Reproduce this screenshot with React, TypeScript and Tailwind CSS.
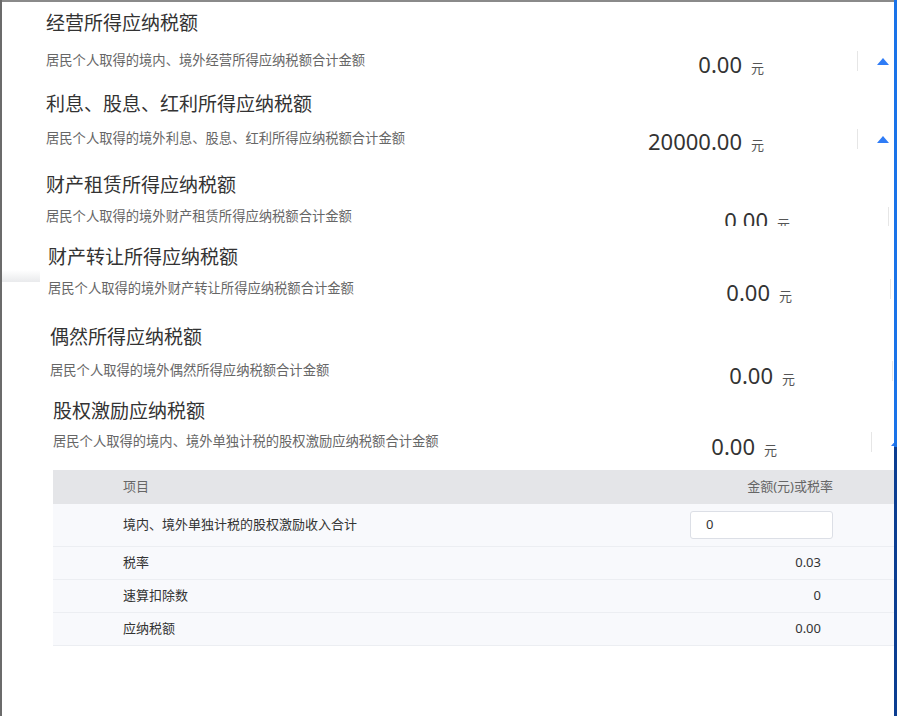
import React from "react";

type Section = {
  title: string;
  desc: string;
  value: string;
  wrap: string;
  row: string;
  spacer: string;
  valueNudge: string;
  showTri: boolean;
};

const sections: Section[] = [
  {
    title: "经营所得应纳税额",
    desc: "居民个人取得的境内、境外经营所得应纳税额合计金额",
    value: "0.00",
    wrap: "h-[81px] pl-[44px]",
    row: "mt-[9px] mr-[5px]",
    spacer: "w-[93px]",
    valueNudge: "mt-[6px]",
    showTri: true,
  },
  {
    title: "利息、股息、红利所得应纳税额",
    desc: "居民个人取得的境外利息、股息、红利所得应纳税额合计金额",
    value: "20000.00",
    wrap: "h-[81px] pl-[44px]",
    row: "mt-[6px] mr-[5px]",
    spacer: "w-[93px]",
    valueNudge: "mt-[4px]",
    showTri: true,
  },
  {
    // this block is cut off at the bottom in the screenshot
    title: "财产租赁所得应纳税额",
    desc: "居民个人取得的境外财产租赁所得应纳税额合计金额",
    value: "0.00",
    wrap: "h-[55px] pl-[44px] overflow-hidden mb-[17px]",
    row: "mt-[3px] mr-[-26px]",
    spacer: "w-[98px]",
    valueNudge: "mt-[6px]",
    showTri: false,
  },
  {
    title: "财产转让所得应纳税额",
    desc: "居民个人取得的境外财产转让所得应纳税额合计金额",
    value: "0.00",
    wrap: "h-[80px] pl-[46px] relative",
    row: "mt-[3px] mr-[-28px]",
    spacer: "w-[98px]",
    valueNudge: "mt-[6px]",
    showTri: false,
  },
  {
    title: "偶然所得应纳税额",
    desc: "居民个人取得的境外偶然所得应纳税额合计金额",
    value: "0.00",
    wrap: "h-[74px] pl-[48px]",
    row: "mt-[5px] mr-[-30px]",
    spacer: "w-[97px]",
    valueNudge: "mt-[8px]",
    showTri: false,
  },
  {
    title: "股权激励应纳税额",
    desc: "居民个人取得的境内、境外单独计税的股权激励应纳税额合计金额",
    value: "0.00",
    wrap: "h-[73px] pl-[51px]",
    row: "mt-[2px] mr-[-9px]",
    spacer: "w-[94px]",
    valueNudge: "mt-[8px]",
    showTri: true,
  },
];

function UpTriangle() {
  return (
    <svg width="12" height="7" viewBox="0 0 12 7" className="shrink-0">
      <path d="M6 0 L12 7 L0 7 Z" fill="#2f7cf6" />
    </svg>
  );
}

function TaxSection({ s, index }: { s: Section; index: number }) {
  return (
    <div className={s.wrap}>
      {index === 3 && (
        <div className="absolute left-[-2px] top-[27px] h-[12px] w-[40px] bg-gradient-to-b from-white to-[#e9eaec]" />
      )}
      <div className="text-[19px] leading-[28px] text-[#333]">{s.title}</div>
      <div className={`flex h-[30px] items-center ${s.row}`}>
        <div className="min-w-0 flex-1 text-[13.3px] text-[#666]">{s.desc}</div>
        <div className={`flex items-baseline whitespace-nowrap ${s.valueNudge}`}>
          <span className="text-[22px] text-[#333]">{s.value}</span>
          <span className="ml-[9px] text-[13px] text-[#555]">元</span>
        </div>
        <div className={`shrink-0 ${s.spacer}`} />
        <div className="h-[20px] w-px shrink-0 bg-[#e6e6e6]" />
        <div className="ml-[19px] flex w-[12px] shrink-0 items-center">
          {s.showTri && <UpTriangle />}
        </div>
      </div>
    </div>
  );
}

const rows = [
  { label: "税率", value: "0.03" },
  { label: "速算扣除数", value: "0" },
  { label: "应纳税额", value: "0.00" },
];

function DetailTable() {
  return (
    <div className="ml-[51px] text-[13px]">
      <div className="flex h-[34px] items-center bg-[#e4e5e8] pl-[70px] pr-[61px] text-[#666]">
        <div className="flex-1">项目</div>
        <div>金额(元)或税率</div>
      </div>
      <div className="flex h-[43px] items-center border-b border-[#eceef2] bg-[#f8f9fc] pl-[70px] pr-[61px] text-[#333]">
        <div className="flex-1">境内、境外单独计税的股权激励收入合计</div>
        <div className="flex h-[28px] w-[143px] items-center rounded-[3px] border border-[#dcdfe6] bg-white pl-[15px]">
          0
        </div>
      </div>
      {rows.map((r) => (
        <div
          key={r.label}
          className="flex h-[33px] items-center border-b border-[#eceef2] bg-[#f8f9fc] pl-[70px] pr-[73px] text-[#333]"
        >
          <div className="flex-1">{r.label}</div>
          <div>{r.value}</div>
        </div>
      ))}
    </div>
  );
}

export default function App() {
  return (
    <div
      className="flex h-[716px] w-[897px] overflow-hidden bg-white"
      style={{ fontFamily: '"Noto Sans", "Noto Sans CJK SC", sans-serif' }}
    >
      <div className="w-[2px] shrink-0 bg-[#6b6b6b]" />
      <div className="flex min-w-0 flex-1 flex-col overflow-hidden">
        <div className="h-[2px] shrink-0 bg-[#8a8a8a]" />
        <div className="pt-[7px]">
          {sections.map((s, i) => (
            <TaxSection key={s.title} s={s} index={i} />
          ))}
        </div>
        <DetailTable />
      </div>
      <div className="flex w-[3px] shrink-0 flex-col">
        <div className="h-[447px] bg-[#1a73e8]" />
        <div className="flex-1 bg-[#0b3d91]" />
      </div>
    </div>
  );
}
